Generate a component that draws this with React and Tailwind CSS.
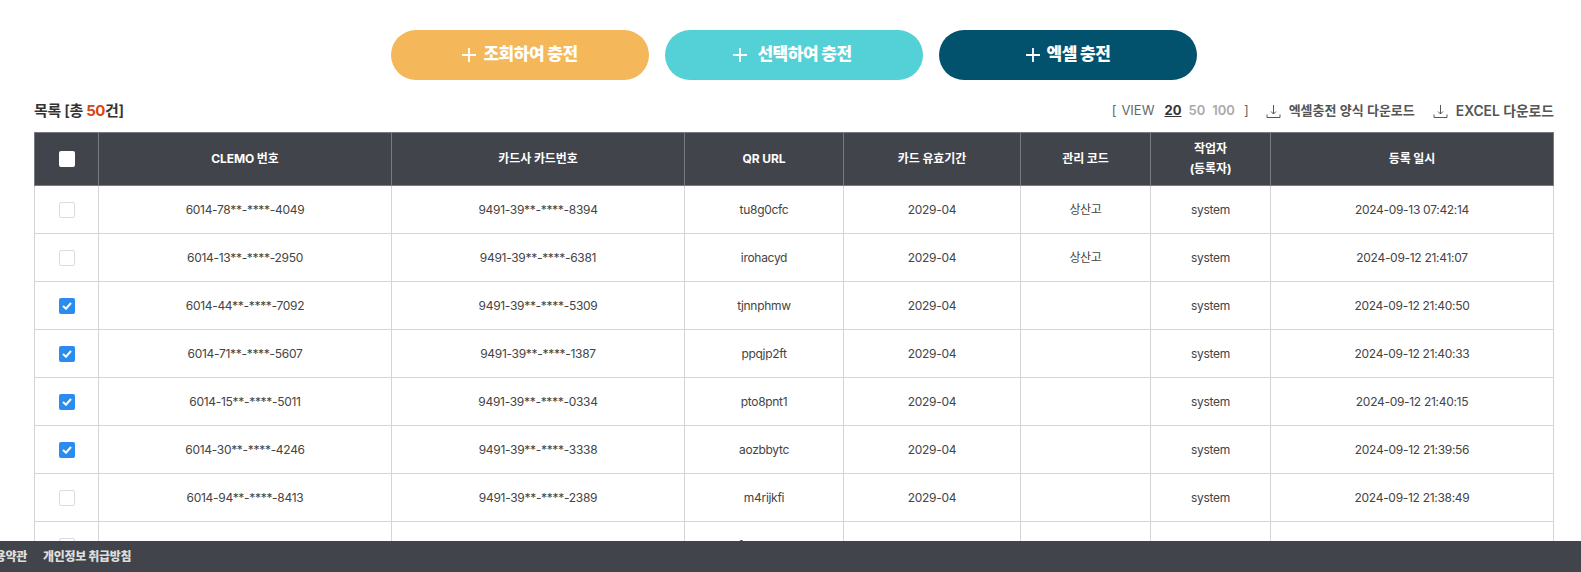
const FONT = { fontFamily: 'Inter, "Noto Sans CJK KR", sans-serif' };

const rows = [
  ["6014-78**-****-4049", "9491-39**-****-8394", "tu8g0cfc", "2029-04", "상산고", "system", "2024-09-13 07:42:14", false],
  ["6014-13**-****-2950", "9491-39**-****-6381", "irohacyd", "2029-04", "상산고", "system", "2024-09-12 21:41:07", false],
  ["6014-44**-****-7092", "9491-39**-****-5309", "tjnnphmw", "2029-04", "", "system", "2024-09-12 21:40:50", true],
  ["6014-71**-****-5607", "9491-39**-****-1387", "ppqjp2ft", "2029-04", "", "system", "2024-09-12 21:40:33", true],
  ["6014-15**-****-5011", "9491-39**-****-0334", "pto8pnt1", "2029-04", "", "system", "2024-09-12 21:40:15", true],
  ["6014-30**-****-4246", "9491-39**-****-3338", "aozbbytc", "2029-04", "", "system", "2024-09-12 21:39:56", true],
  ["6014-94**-****-8413", "9491-39**-****-2389", "m4rijkfi", "2029-04", "", "system", "2024-09-12 21:38:49", false],
  ["6014-91**-****-7594", "9491-39**-****-6380", "fyn3kd0a", "2029-04", "", "system", "2024-09-12 21:38:31", false],
];

function DownloadIcon() {
  return (
    <svg width="15" height="15" viewBox="0 0 15 15" fill="none" stroke="#555" strokeWidth="1">
      <path d="M7.5 1v9M5 7.5l2.5 2.5 2.5-2.5M1 10.5v3h13v-3" />
    </svg>
  );
}

function Plus() {
  return (
    <svg width="14" height="14" viewBox="0 0 14 14" stroke="#fff" strokeWidth="1.8" fill="none">
      <path d="M7 0v14M0 7h14" />
    </svg>
  );
}

function ActionButton({ className, children }) {
  return (
    <button className={`flex h-[50px] w-[258px] items-center justify-center rounded-[25px] text-[17px] font-extrabold tracking-[-0.5px] text-white ${className}`}>
      <Plus />
      <span>{children}</span>
    </button>
  );
}

function Check({ checked }) {
  if (checked) {
    return (
      <span className="mx-auto flex h-4 w-4 items-center justify-center rounded-[2px] bg-[#2a8cf0]">
        <svg width="10" height="8" viewBox="0 0 10 8" fill="none" stroke="#fff" strokeWidth="2">
          <path d="M1 4l3 2.7L9 1" />
        </svg>
      </span>
    );
  }
  return <span className="mx-auto block h-4 w-4 rounded-[2px] border border-[#dcdcdc] bg-white" />;
}

export default function App() {
  return (
    <div className="h-screen overflow-hidden bg-white" style={FONT}>
      <div className="pl-[34px] pr-[27px] pt-[30px]">
        <div className="flex w-[1520px] justify-center gap-4">
          <ActionButton className="gap-[7px] bg-[#f4b759]">조회하여 충전</ActionButton>
          <ActionButton className="gap-[10px] bg-[#54d0d7] pr-[3px]">선택하여 충전</ActionButton>
          <ActionButton className="gap-[7px] bg-[#03526d]">엑셀 충전</ActionButton>
        </div>

        <div className="mt-[14px] flex h-[38px] w-[1520px] items-center justify-between pb-[4px]">
          <div className="text-[15px] font-semibold tracking-[-0.4px] text-[#333]">
            목록 [총 <span className="font-bold text-[#d9450f]">50</span>건]
          </div>
          <div className="flex items-center text-[13px] text-[#666]">
            <span>[</span>
            <span className="ml-[5px]">VIEW</span>
            <span className="ml-[10px] font-bold text-[#333] underline">20</span>
            <span className="ml-[7px] font-semibold text-[#aaa]">50</span>
            <span className="ml-[7px] font-semibold text-[#aaa]">100</span>
            <span className="ml-[9px]">]</span>
            <span className="ml-[17px] flex items-center gap-2 font-semibold text-[#555]">
              <DownloadIcon />
              엑셀충전 양식 다운로드
            </span>
            <span className="ml-[18px] flex items-center gap-2 text-[13.8px] font-semibold text-[#555]">
              <DownloadIcon />
              EXCEL 다운로드
            </span>
          </div>
        </div>

        <table className="w-[1519px] table-fixed border-collapse text-center text-[12px] tracking-[-0.3px]">
          <colgroup>
            <col className="w-[64px]" />
            <col className="w-[293px]" />
            <col className="w-[293px]" />
            <col className="w-[159px]" />
            <col className="w-[177px]" />
            <col className="w-[130px]" />
            <col className="w-[120px]" />
            <col className="w-[283px]" />
          </colgroup>
          <thead>
            <tr className="h-[53px] bg-[#41444b] font-extrabold tracking-[-0.1px] text-white">
              <th className="border border-[#777a80]">
                <span className="mx-auto block h-4 w-4 rounded-[2px] bg-white" />
              </th>
              <th className="border border-[#777a80]">CLEMO 번호</th>
              <th className="border border-[#777a80]">카드사 카드번호</th>
              <th className="border border-[#777a80]">QR URL</th>
              <th className="border border-[#777a80]">카드 유효기간</th>
              <th className="border border-[#777a80]">관리 코드</th>
              <th className="border border-[#777a80] leading-[20px]">작업자<br />(등록자)</th>
              <th className="border border-[#777a80]">등록 일시</th>
            </tr>
          </thead>
          <tbody className="text-[#444]">
            {rows.map((r) => (
              <tr key={r[0]} className="h-[48px]">
                <td className="border border-[#d5d5d5]"><Check checked={r[7]} /></td>
                <td className="border border-[#d5d5d5]">{r[0]}</td>
                <td className="border border-[#d5d5d5]">{r[1]}</td>
                <td className="border border-[#d5d5d5]">{r[2]}</td>
                <td className="border border-[#d5d5d5]">{r[3]}</td>
                <td className="border border-[#d5d5d5]">{r[4]}</td>
                <td className="border border-[#d5d5d5]">{r[5]}</td>
                <td className="border border-[#d5d5d5]">{r[6]}</td>
              </tr>
            ))}
          </tbody>
        </table>
      </div>

      <footer className="fixed inset-x-0 bottom-0 flex h-[31px] items-center gap-[16px] overflow-hidden bg-[#41444b] text-[12px] font-extrabold tracking-[-0.3px] text-[#ddd]">
        <span className="-ml-[16px] whitespace-nowrap">이용약관</span>
        <span className="whitespace-nowrap">개인정보 취급방침</span>
      </footer>
    </div>
  );
}
